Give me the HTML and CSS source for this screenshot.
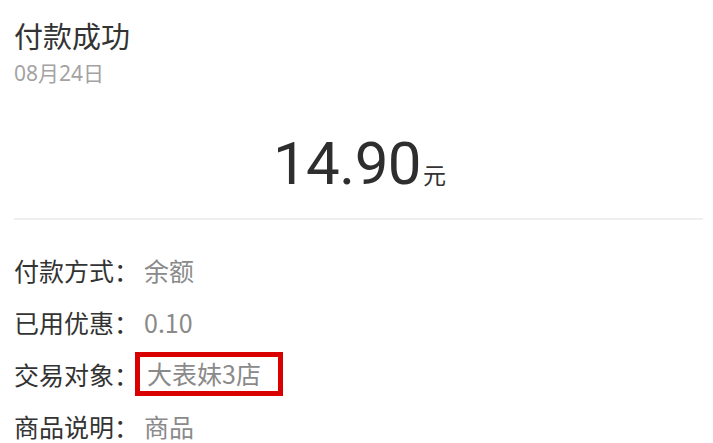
FILE: index.html
```html
<!DOCTYPE html>
<html lang="zh-CN">
<head>
<meta charset="utf-8">
<link rel="stylesheet" href="styles.css">
</head>
<body>
<div class="page">
  <header class="head">
    <h1 class="title">付款成功</h1>
    <div class="date">08月24日</div>
  </header>
  <div class="amount"><span class="num">14.90</span><span class="unit">元</span></div>
  <hr class="sep">
  <ul class="rows">
    <li class="row"><span class="label">付款方式：</span><span class="value">余额</span></li>
    <li class="row"><span class="label">已用优惠：</span><span class="value">0.10</span></li>
    <li class="row"><span class="label">交易对象：</span><span class="value boxed">大表妹3店</span></li>
    <li class="row"><span class="label">商品说明：</span><span class="value">商品</span></li>
  </ul>
</div>
</body>
</html>
```
FILE: styles.css
```css
* { box-sizing: border-box; }
html, body { margin: 0; padding: 0; background: #fff; }
body {
  font-family: "Noto Sans CJK SC", "Noto Sans", sans-serif;
  color: #333;
  width: 713px;
  height: 443px;
  overflow: hidden;
}
.page { padding: 0 10px 0 14px; }
.head { padding-top: 15px; }
.title {
  margin: 0;
  font-size: 29px;
  font-weight: 400;
  line-height: 40px;
  color: #333;
}
.date {
  font-family: "Noto Sans", "Noto Sans CJK SC", sans-serif;
  font-size: 21px;
  line-height: 28px;
  margin-top: 4px;
  color: #a3a3a3;
}
.amount {
  display: flex;
  justify-content: center;
  align-items: baseline;
  margin-top: 41px;
  height: 72px;
  padding-left: 2px;
}
.num {
  font-family: Roboto, sans-serif;
  font-size: 60px;
  line-height: 72px;
  color: #2e2e2e;
  letter-spacing: -0.5px;
}
.unit {
  font-size: 23px;
  margin-left: 2px;
  color: #333;
}
.sep {
  margin: 0;
  margin-top: 18px;
  border: 0;
  border-top: 2px solid #efefef;
}
.rows {
  list-style: none;
  margin: 0;
  padding: 0;
  padding-top: 24px;
}
.row {
  display: flex;
  align-items: center;
  height: 52px;
  font-size: 25px;
  line-height: 34px;
}
.label { color: #333; }
.value {
  color: #8a8a8a;
  margin-left: 5px;
}
.boxed {
  margin-left: 3px;
  outline: 5px solid #d90000;
  outline-offset: 2px;
  padding: 0 15px 0 5px;
  line-height: 29px;
  height: 30px;
}
```
